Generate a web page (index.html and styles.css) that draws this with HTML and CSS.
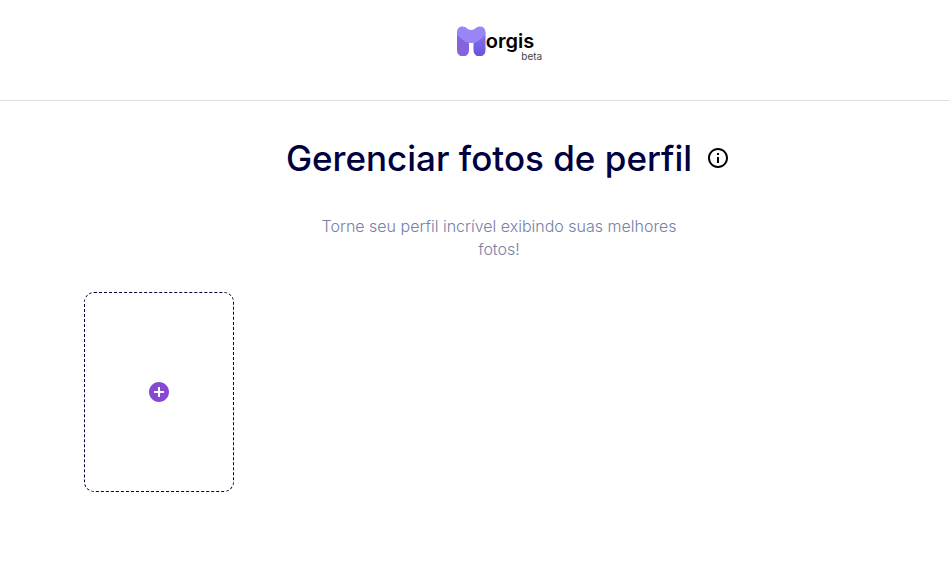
FILE: index.html
```html
<!DOCTYPE html>
<html lang="pt-BR">
  <head>
    <meta charset="UTF-8" />
    <meta name="viewport" content="width=device-width, initial-scale=1.0" />
    <title>Morgis</title>
    <link rel="stylesheet" href="styles.css">
  </head>
  <body>
    <header class="header">
      <a class="logo" href="#" aria-label="Morgis beta">
        <svg class="logo-mark" width="30" height="32" viewBox="0 0 30 32">
          <defs>
            <linearGradient id="right" x1="0" y1="0" x2="0" y2="1">
              <stop offset="0" stop-color="#8673ee" />
              <stop offset="1" stop-color="#6654dc" />
            </linearGradient>
          </defs>
          <path d="M1 8h12v18.500a6 6 0 0 1-12 0z" fill="#8663dc" />
          <path d="M17.500 8h12v18.500a6 6 0 0 1-12 0z" fill="url(#right)" />
          <path d="M1 8C1 4.500 3.500 2.500 6.500 2.500c4 0 5 3.500 8.700 3.500s4.700-3.500 8.700-3.500c3 0 5.600 2 5.600 5.500 0 3-1.500 4.600-3.500 6C23 17 19.500 19 15.200 19S7.500 17 4.500 14C2.500 12.600 1 11 1 8z" fill="#9a85f4" />
        </svg>
        <span class="logo-name">orgis</span>
        <span class="logo-tag">beta</span>
      </a>
    </header>

    <main class="content">
      <div class="title-row">
        <h1 class="title">Gerenciar fotos de perfil</h1>
        <button class="info" type="button" aria-label="Informações">
          <svg width="24" height="24" viewBox="0 0 24 24">
            <path d="M11 7h2v2h-2zm0 4h2v6h-2zm1-9C6.480 2 2 6.480 2 12s4.480 10 10 10 10-4.480 10-10S17.520 2 12 2zm0 18c-4.410 0-8-3.590-8-8s3.590-8 8-8 8 3.590 8 8-3.590 8-8 8z" />
          </svg>
        </button>
      </div>
      <p class="subtitle">Torne seu perfil incrível exibindo suas melhores fotos!</p>
      <div class="photos">
        <button class="add-photo" type="button" aria-label="Adicionar foto">
          <svg width="24" height="24" viewBox="0 0 24 24">
            <path d="M12 2C6.480 2 2 6.480 2 12s4.480 10 10 10 10-4.480 10-10S17.520 2 12 2zm5 11h-4v4h-2v-4H7v-2h4V7h2v4h4v2z" />
          </svg>
        </button>
      </div>
    </main>
  </body>
</html>
```

FILE: styles.css
```css
* {
  box-sizing: border-box;
}
body {
  margin: 0;
  font-family: Inter, "Liberation Sans", sans-serif;
  background-color: #fff;
  color: #00003f;
}
.header {
  display: flex;
  justify-content: center;
  padding: 24px 0 36px 48px;
  border-bottom: 1px solid #e0e0e0;
}
.logo {
  display: grid;
  grid-template-columns: 30px auto;
  grid-template-rows: 26px 14px;
  padding-right: 8px;
  color: #000;
  text-decoration: none;
}
.logo-mark {
  grid-row: 1 / 3;
}
.logo-name {
  font-size: 20px;
  font-weight: 600;
  line-height: 34px;
}
.logo-tag {
  justify-self: end;
  margin-right: -8px;
  font-size: 10px;
  line-height: 12px;
  color: #444;
}
.content {
  padding: 32px 0 0 48px;
}
.title-row {
  display: flex;
  justify-content: center;
  align-items: center;
  gap: 6px;
  padding-left: 26px;
}
.title {
  margin: 0;
  font-size: 35px;
  font-weight: 450;
  line-height: 50px;
}
.info {
  display: flex;
  padding: 8px;
  border: none;
  background: none;
  cursor: pointer;
}
.add-photo {
  display: flex;
  justify-content: center;
  align-items: center;
  width: 150px;
  height: 200px;
  border: 1px dashed #00003f;
  border-radius: 10px;
  background: none;
  cursor: pointer;
}
.add-photo svg {
  fill: #8549d2;
}
.subtitle {
  max-width: 400px;
  margin: 32px auto 0;
  font-size: 16px;
  font-weight: 350;
  line-height: 23px;
  text-align: center;
  color: #7780a8;
}
.photos {
  display: flex;
  flex-wrap: wrap;
  gap: 16px;
  padding: 31px 36px;
}
```
